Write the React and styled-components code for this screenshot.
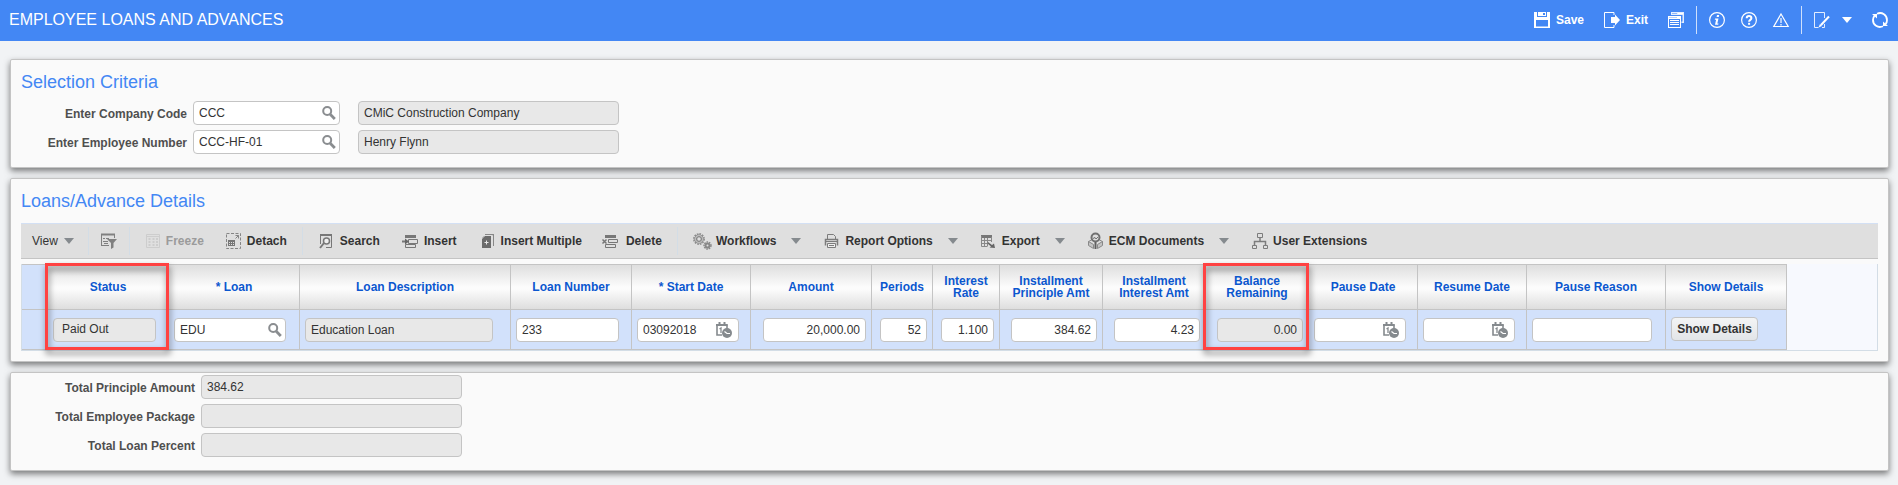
import React from "react";
import styled, { createGlobalStyle, css } from "styled-components";

const Global = createGlobalStyle`
  *, *::before, *::after { box-sizing: border-box; }
  body {
    margin: 0;
    background: #f1f3f5;
    color: #333;
    font: 12px/14px "Liberation Sans", Arial, sans-serif;
  }
  button, input { font: inherit; color: inherit; }
`;

/* ---------- shared pieces ---------- */

const Icon = styled.svg.attrs({ width: 16, height: 16, viewBox: "0 0 16 16", "aria-hidden": true })`
  display: block;
  flex: none;
  overflow: visible;
`;

const PlainButton = styled.button`
  display: flex;
  align-items: center;
  gap: 6px;
  padding: 0;
  border: 0;
  background: none;
  font-weight: ${(p) => (p.$regular ? 400 : 700)};
  white-space: nowrap;
  cursor: pointer;
  &:disabled { color: #9b9b9b; cursor: default; }
`;

const Caret = styled.span`
  flex: none;
  border: solid transparent;
  border-width: 6px 5px 0;
  border-top-color: ${(p) => p.$color || "#858a8e"};
`;

/* ---------- header ---------- */

const Header = styled.header`
  display: flex;
  align-items: center;
  justify-content: space-between;
  height: 41px;
  padding: 0 10px 1px 9px;
  background: #4387f4;
  color: #fff;
`;

const Title = styled.h1`
  margin: 0;
  font-size: 16px;
  line-height: 18px;
  font-weight: 400;
`;

const HeaderActions = styled.nav`
  display: flex;
  align-items: center;
`;

const HeaderGroup = styled.div`
  display: flex;
  align-items: center;
  gap: ${(p) => p.$gap}px;
  padding: 0 12px;
  height: 28px;
  & + & { border-left: 1px solid #cfe0fc; }
  &:last-child { padding-right: 0; }
`;

const CaretGroup = styled.div`
  display: flex;
  align-items: center;
  gap: 12px;
`;

/* ---------- panels and fields ---------- */

const Main = styled.main`
  display: flex;
  flex-direction: column;
  gap: 10px;
  padding: 18px 9px 14px 10px;
`;

const Panel = styled.section`
  padding: ${(p) => p.$pad};
  border: 1px solid #c4c4c4;
  border-radius: 2px;
  background: #fafafa;
  box-shadow: 0 3px 6px rgba(0, 0, 0, 0.5);
`;

const Heading = styled.h2`
  margin: 0;
  font-size: 18px;
  line-height: 20px;
  font-weight: 400;
  color: #4387f4;
`;

const SelectionFields = styled.div`
  display: grid;
  grid-template-columns: 172px 165px 261px;
  row-gap: 5px;
  align-items: center;
  margin-top: 9px;
`;

const TotalFields = styled.div`
  display: grid;
  grid-template-columns: 180px 261px;
  row-gap: 5px;
  align-items: center;
`;

const Label = styled.label`
  padding: 2px 6px 0 0;
  text-align: right;
  font-weight: 700;
  color: #4f4f4f;
`;

const box = css`
  height: 24px;
  border: 1px solid #c4c4c4;
  border-radius: 4px;
  background: ${(p) => (p.$locked ? "#e8e8e8" : "#fff")};
`;

const Input = styled.input`
  ${box}
  display: block;
  width: ${(p) => (p.$width ? `${p.$width}px` : "100%")};
  margin: ${(p) => (p.$right ? "0 0 0 auto" : "0")};
  padding: 0 5px ${(p) => (p.$raised ? 2 : 0)}px ${(p) => p.$indent || 5}px;
  text-align: ${(p) => (p.$right ? "right" : "left")};
  outline: 0;
`;

const Combo = styled.div`
  ${box}
  display: flex;
  align-items: center;
  width: ${(p) => p.$width}px;
  padding-right: ${(p) => p.$end}px;
  input {
    flex: 1;
    min-width: 0;
    padding: 0 0 0 5px;
    border: 0;
    outline: 0;
    background: none;
  }
`;

/* ---------- toolbar ---------- */

const Toolbar = styled.div`
  display: flex;
  align-items: center;
  height: 36px;
  margin: 12px 0 5px;
  border-top: 1px solid #d3e0f4;
  border-bottom: 1px solid #c4c4c4;
  background: #dfdfdf;
`;

const ToolGroup = styled.div`
  display: flex;
  align-items: center;
  gap: ${(p) => p.$gap || 22}px;
  height: 28px;
  padding: 0 ${(p) => p.$right || 15}px 0 ${(p) => p.$left || 15}px;
  & + & { border-left: 1px solid #d3dde6; }
`;

const MenuPair = styled.div`
  display: flex;
  align-items: center;
  gap: 15px;
`;

/* ---------- grid ---------- */

const GridFrame = styled.div`
  border: solid #d3dde6;
  border-width: 0 1px 1px;
  background: #f7f9fe;
`;

const Grid = styled.table`
  table-layout: fixed;
  width: ${(p) => p.$width}px;
  border-collapse: separate;
  border-spacing: 0;
  border-top: 1px solid #c4c4c4;
`;

const Head = styled.th`
  position: relative;
  height: 45px;
  padding: 0 4px;
  border: solid #c4c4c4;
  border-width: 0 1px 1px 0;
  background: ${(p) =>
    p.$blank ? "#d2e1fb" : "linear-gradient(#dedede, #fcfcfc 50%, #fcfcfc 55%, #dedede)"};
  color: #0b57cf;
  line-height: 12px;
  white-space: pre-line;
`;

const Cell = styled.td`
  height: 40px;
  padding: 1px 5px 0;
  border: solid #c4c4c4;
  border-width: 0 1px 1px 0;
  background: #d2e1fb;
`;

const Mark = styled.span`
  position: absolute;
  z-index: 1;
  inset: -2px -1px auto -3px;
  height: 87px;
  border: 3px solid #ff4242;
  filter: drop-shadow(1px 4px 3px rgba(0, 0, 0, 0.5));
  pointer-events: none;
`;

const DetailButton = styled.button`
  display: block;
  width: 87px;
  height: 24px;
  margin-bottom: 2px;
  padding: 0 0 1px;
  border: 1px solid #c4c4c4;
  border-radius: 4px;
  background: linear-gradient(#f3f4f5, #e2e5e8);
  font-weight: 700;
  white-space: nowrap;
`;

/* ---------- icons ---------- */

const Magnifier = () => (
  <Icon fill="none" stroke="#8a8d90">
    <circle cx="6.2" cy="6" r="4" strokeWidth="2" />
    <path d="M9.2 9.2l4.6 4.8" strokeWidth="2.8" />
  </Icon>
);

const CalendarClock = () => (
  <Icon>
    <path d="M1 3h10v4M1 2v11h5" fill="none" stroke="#858a8e" strokeWidth="1.6" />
    <path d="M2.500 0h2v3h-2zM7.500 0h2v3h-2zM0 2h11.500v2H0z" fill="#858a8e" />
    <path d="M3.500 7l1.500-1v5" fill="none" stroke="#858a8e" strokeWidth="1.300" />
    <circle cx="11" cy="11" r="5" fill="#858a8e" />
    <path d="M8.500 9.500l2.500 2h3" fill="none" stroke="#fff" strokeWidth="1.200" />
  </Icon>
);

const SaveIcon = () => (
  <Icon fill="#fff">
    <path d="M0 0h3v5h10V0h3v16H0zM2 8v6.500h12V8z" fillRule="evenodd" />
    <path d="M4 0h8v4H4zM9 1v2h2V1z" fillRule="evenodd" />
    <path d="M2 5.500h12v2H2z" opacity=".75" />
  </Icon>
);

const ExitIcon = () => (
  <Icon>
    <path d="M10 3V.5H.5v15H10V13" fill="none" stroke="#fff" />
    <path d="M7 5h4V2.500L16 8l-5 5.500V11H7z" fill="#fff" />
  </Icon>
);

const WindowsIcon = () => (
  <Icon>
    <path d="M3 3V0h13v11h-2.500V9.500h1V3z" fill="#fff" opacity=".85" />
    <path d="M0 4h13v12H0zM1 7v8h11V7z" fill="#fff" fillRule="evenodd" />
    <path d="M2 8.500h9M2 10.500h9M2 12.500h9M10 1.500h5" stroke="#fff" />
    <path d="M4 1.500h5" stroke="#8fb8f8" />
    <path d="M1 5.500h8" stroke="#b9d2fb" />
  </Icon>
);

const InfoIcon = () => (
  <Icon>
    <circle cx="8" cy="8" r="7.400" fill="none" stroke="#fff" strokeWidth="1.200" />
    <path d="M8 3h2.200l-.4 2H7.600zM6 6.500h3.500L8.300 11.500h1.200l-.3 1.300H6l1.100-5H5.800z" fill="#fff" />
  </Icon>
);

const HelpIcon = () => (
  <Icon fill="none" stroke="#fff">
    <circle cx="8" cy="8" r="7.400" strokeWidth="1.200" />
    <path d="M5.700 6.200C5.700 3.300 10.400 3.300 10.400 6.200 10.400 7.900 8.100 7.800 8.100 9.800" strokeWidth="2" />
    <path d="M8.100 10.800v2" strokeWidth="2" />
  </Icon>
);

const WarningIcon = () => (
  <Icon fill="none" stroke="#fff">
    <path d="M8 2L15.200 14.500H.8z" strokeWidth="1.200" />
    <path d="M8 6v5M8 12v1.500" strokeWidth="1.500" opacity=".8" />
  </Icon>
);

const NoteIcon = () => (
  <Icon fill="none" stroke="#fff">
    <path d="M10.500 6V.5H.5v15h4M10.500 12v3.500H8" opacity=".85" />
    <path d="M15 4.500L7 13" strokeWidth="2" />
    <path d="M6 12l2 2-3.500 1.500z" fill="#fff" stroke="none" />
  </Icon>
);

const RefreshIcon = () => (
  <Icon fill="none" stroke="#fff" strokeWidth="1.800">
    <path d="M5 1.700C10 -.5 15.200 3 15 8.200c0 1.500-.6 3-1.500 4M11 14.300C6 16.500.8 13 1 7.800c0-1.500.6-3 1.500-4" />
    <path d="M0 2h5v4.500zM16 14h-5V9.500z" fill="#fff" stroke="none" />
  </Icon>
);

const FilterIcon = () => (
  <Icon stroke="#808080" fill="none">
    <path d="M0 1.500h14" strokeWidth="2" />
    <path d="M.5 1v12M2 5.500h2M5 5.500h3M2 8.500h5M0 12.500h8M3 10.500h4M13.500 2v3" />
    <path d="M6 6h10l-3.500 4v4.500L10 16v-6z" fill="#808080" stroke="none" />
  </Icon>
);

const FreezeIcon = () => (
  <Icon stroke="#cdcdcd" fill="none">
    <path d="M2.500 1.500h13v13h-13zM3 3.500h12" />
    <path d="M5.500 5v8M9.500 5v8M13 5v8" strokeWidth="2" strokeDasharray="2 1" />
  </Icon>
);

const DetachIcon = () => (
  <Icon stroke="#858585" fill="none">
    <path d="M1.500 .5h14v15h-14z" strokeDasharray="3 1.500" />
    <path d="M3 7h7v6H3z" fill="#777" stroke="none" />
    <path d="M4 9.500h5M4 11.500h5" stroke="#dfdfdf" strokeDasharray="1 1" />
    <path d="M10.500 5.500l3-3M10.500 2.500h3v3" />
  </Icon>
);

const SearchPageIcon = () => (
  <Icon stroke="#777" fill="none">
    <path d="M2.500 11V1.500h11v13H8" />
    <path d="M2 2h12" strokeWidth="2" />
    <circle cx="8.500" cy="8" r="3" strokeWidth="1.500" fill="#eee" />
    <path d="M6 10l-4 5" strokeWidth="2" />
  </Icon>
);

const InsertIcon = () => (
  <Icon stroke="#777" fill="none">
    <path d="M3 2h11v3H3z" fill="#777" stroke="none" />
    <path d="M6.500 6.500h9v4h-9zM3.500 11.500h10v3h-10z" />
    <path d="M0 8.500h4" strokeWidth="2" />
    <path d="M3 5.500l4 3-4 3z" fill="#666" stroke="none" />
  </Icon>
);

const InsertMultipleIcon = () => (
  <Icon>
    <path d="M6 2V1h9v12h-2V2z" fill="#888" />
    <path d="M7 2.500h6.500V14" fill="none" stroke="#dfdfdf" />
    <path d="M3 6l3-3h6v12H3z" fill="#6b6b6b" />
    <path d="M3 5l2-2v2z" fill="#999" />
    <path d="M7.500 7.500v4M5.500 9.500h4" stroke="#e8e8e8" />
  </Icon>
);

const DeleteIcon = () => (
  <Icon stroke="#777" fill="none">
    <path d="M1 2h11v3H1z" fill="#777" stroke="none" />
    <path d="M4.500 6.500h9v3h-9zM1.500 11.500h10v3h-10z" />
    <path d="M-1.500 6.500l4 4M2.500 6.500l-4 4" strokeWidth="1.500" />
  </Icon>
);

const GearsIcon = () => (
  <Icon stroke="#888" fill="none">
    <circle cx="5" cy="6" r="5.200" strokeWidth="1.400" strokeDasharray="1.700 1" />
    <circle cx="5" cy="6" r="4.200" />
    <circle cx="5" cy="6" r="2.400" strokeWidth="1.300" />
    <circle cx="13.500" cy="12.500" r="3.500" strokeWidth="1.400" strokeDasharray="1.600 .9" />
    <circle cx="13.500" cy="12.500" r="2" strokeWidth="2" />
  </Icon>
);

const PrinterIcon = () => (
  <Icon stroke="#7c7c7c" fill="none">
    <path d="M4.500 6V1.500h6l2 2V6" />
    <path d="M2.500 12.500v-6h12v6" strokeWidth="1.500" />
    <path d="M3 8.500h11" />
    <path d="M4.500 10.500h8v4h-8zM6 12.500h5" fill="#eee" />
  </Icon>
);

const ExportIcon = () => (
  <Icon stroke="#888" fill="none">
    <path d="M1 2h11v3H1z" fill="#777" stroke="none" />
    <path d="M1.500 3v10.500h6M1 7.500h11M1 10.500h7M4.500 5v9M7.500 5v8M11.500 4v5" />
    <path d="M8 9l4 3 2-1.500 1 4.500-5.500-.5 1.500-1-3.500-3z" fill="#666" stroke="none" />
  </Icon>
);

const EcmIcon = () => (
  <Icon stroke="#888" fill="none">
    <path d="M1.500 8.500l5 3v4l-5-3zM15.500 8.500l-5 3v4l5-3z" fill="#c4c4c4" />
    <path d="M1.500 8.500l3-1.500M15.500 8.500L12.500 7" />
    <circle cx="8.500" cy="4.500" r="4" strokeWidth="2" stroke="#707070" fill="#ddd" />
    <path d="M6 5.500l2-1 1 1.500 2-2" stroke="#707070" />
    <path d="M8.500 9v7" strokeWidth="2" stroke="#606060" />
  </Icon>
);

const TreeIcon = () => (
  <Icon stroke="#7c7c7c" fill="none">
    <path d="M6.500 .5h5v4h-5zM1.500 12.500h4v3h-4zM12.500 12.500h4v3h-4z" />
    <path d="M9 5v3.500M3.500 12V8.500h11V12" strokeWidth="1.500" />
  </Icon>
);

/* ---------- data ---------- */

const columns = [
  { key: "gutter", title: "", width: 26 },
  { key: "status", title: "Status", width: 121, value: "Paid Out", input: 103, locked: true, indent: 8, marked: true, raised: true },
  { key: "loan", title: "* Loan", width: 131, value: "EDU", input: 112, kind: "lookup" },
  { key: "desc", title: "Loan Description", width: 211, value: "Education Loan", input: 188, locked: true },
  { key: "number", title: "Loan Number", width: 121, value: "233", input: 103 },
  { key: "start", title: "* Start Date", width: 119, value: "03092018", input: 102, kind: "date" },
  { key: "amount", title: "Amount", width: 121, value: "20,000.00", input: 103, right: true },
  { key: "periods", title: "Periods", width: 61, value: "52", input: 47, right: true },
  { key: "rate", title: "Interest\nRate", width: 67, value: "1.100", input: 53, right: true },
  { key: "principle", title: "Installment\nPrinciple Amt", width: 103, value: "384.62", input: 86, right: true },
  { key: "interest", title: "Installment\nInterest Amt", width: 103, value: "4.23", input: 86, right: true },
  { key: "balance", title: "Balance\nRemaining", width: 103, value: "0.00", input: 86, right: true, locked: true, marked: true },
  { key: "pause", title: "Pause Date", width: 109, value: "", input: 92, kind: "date" },
  { key: "resume", title: "Resume Date", width: 109, value: "", input: 92, kind: "date" },
  { key: "reason", title: "Pause Reason", width: 139, value: "", input: 120 },
  { key: "details", title: "Show Details", width: 121, kind: "button" },
];

const gridWidth = columns.reduce((sum, c) => sum + c.width, 0);

const totals = [
  ["Total Principle Amount", "384.62"],
  ["Total Employee Package", ""],
  ["Total Loan Percent", ""],
];

function ComboField({ id, label, value, width, date }) {
  return (
    <Combo $width={width} $end={date ? 6 : 2}>
      <input id={id} aria-label={label} defaultValue={value} />
      <PlainButton type="button" aria-label={date ? "Pick a date" : "Look up"}>
        {date ? <CalendarClock /> : <Magnifier />}
      </PlainButton>
    </Combo>
  );
}

function CellContent({ col }) {
  if (col.key === "gutter") return null;
  if (col.kind === "button") return <DetailButton type="button">Show Details</DetailButton>;
  if (col.kind) {
    return <ComboField label={col.title} value={col.value} width={col.input} date={col.kind === "date"} />;
  }
  return (
    <Input
      aria-label={col.title}
      defaultValue={col.value}
      readOnly={col.locked}
      $width={col.input}
      $right={col.right}
      $locked={col.locked}
      $indent={col.indent}
      $raised={col.raised}
    />
  );
}

const Tool = ({ icon: Glyph, children, ...rest }) => (
  <PlainButton type="button" {...rest}>
    <Glyph />
    {children}
  </PlainButton>
);

const ToolMenu = ({ icon, children }) => (
  <MenuPair>
    <Tool icon={icon}>{children}</Tool>
    <Caret />
  </MenuPair>
);

export default function App() {
  return (
    <>
      <Global />
      <Header>
        <Title>EMPLOYEE LOANS AND ADVANCES</Title>
        <HeaderActions>
          <HeaderGroup $gap={20}>
            <Tool icon={SaveIcon}>Save</Tool>
            <Tool icon={ExitIcon}>Exit</Tool>
            <Tool icon={WindowsIcon} aria-label="Windows" />
          </HeaderGroup>
          <HeaderGroup $gap={16}>
            <Tool icon={InfoIcon} aria-label="Information" />
            <Tool icon={HelpIcon} aria-label="Help" />
            <Tool icon={WarningIcon} aria-label="Warnings" />
          </HeaderGroup>
          <HeaderGroup $gap={20}>
            <CaretGroup>
              <Tool icon={NoteIcon} aria-label="Notes" />
              <Caret $color="#fff" />
            </CaretGroup>
            <Tool icon={RefreshIcon} aria-label="Refresh" />
          </HeaderGroup>
        </HeaderActions>
      </Header>

      <Main>
        <Panel $pad="12px 10px 13px">
          <Heading>Selection Criteria</Heading>
          <SelectionFields>
            <Label htmlFor="company">Enter Company Code</Label>
            <ComboField id="company" value="CCC" width={147} />
            <Input aria-label="Company name" readOnly $locked defaultValue="CMiC Construction Company" />
            <Label htmlFor="employee">Enter Employee Number</Label>
            <ComboField id="employee" value="CCC-HF-01" width={147} />
            <Input aria-label="Employee name" readOnly $locked defaultValue="Henry Flynn" />
          </SelectionFields>
        </Panel>

        <Panel $pad="12px 10px 10px">
          <Heading>Loans/Advance Details</Heading>
          <Toolbar role="toolbar">
            <ToolGroup $left={11} $right={14}>
              <PlainButton type="button" $regular>
                View
                <Caret />
              </PlainButton>
            </ToolGroup>
            <ToolGroup $left={12} $right={12}>
              <Tool icon={FilterIcon} aria-label="Filter" />
            </ToolGroup>
            <ToolGroup $left={14} $gap={21}>
              <Tool icon={FreezeIcon} disabled>Freeze</Tool>
              <Tool icon={DetachIcon}>Detach</Tool>
            </ToolGroup>
            <ToolGroup>
              <Tool icon={SearchPageIcon}>Search</Tool>
              <Tool icon={InsertIcon}>Insert</Tool>
              <Tool icon={InsertMultipleIcon}>Insert Multiple</Tool>
              <Tool icon={DeleteIcon}>Delete</Tool>
            </ToolGroup>
            <ToolGroup $left={16}>
              <ToolMenu icon={GearsIcon}>Workflows</ToolMenu>
              <ToolMenu icon={PrinterIcon}>Report Options</ToolMenu>
              <ToolMenu icon={ExportIcon}>Export</ToolMenu>
              <ToolMenu icon={EcmIcon}>ECM Documents</ToolMenu>
              <Tool icon={TreeIcon}>User Extensions</Tool>
            </ToolGroup>
          </Toolbar>
          <GridFrame>
            <Grid $width={gridWidth}>
              <colgroup>
                {columns.map((c) => (
                  <col key={c.key} width={c.width} />
                ))}
              </colgroup>
              <thead>
                <tr>
                  {columns.map((c) => (
                    <Head key={c.key} scope="col" $blank={!c.title}>
                      {c.title}
                      {c.marked && <Mark />}
                    </Head>
                  ))}
                </tr>
              </thead>
              <tbody>
                <tr>
                  {columns.map((c) => (
                    <Cell key={c.key}>
                      <CellContent col={c} />
                    </Cell>
                  ))}
                </tr>
              </tbody>
            </Grid>
          </GridFrame>
        </Panel>

        <Panel $pad="2px 10px 13px">
          <TotalFields>
            {totals.map(([label, value], i) => (
              <React.Fragment key={label}>
                <Label htmlFor={`total-${i}`}>{label}</Label>
                <Input id={`total-${i}`} readOnly $locked defaultValue={value} />
              </React.Fragment>
            ))}
          </TotalFields>
        </Panel>
      </Main>
    </>
  );
}
